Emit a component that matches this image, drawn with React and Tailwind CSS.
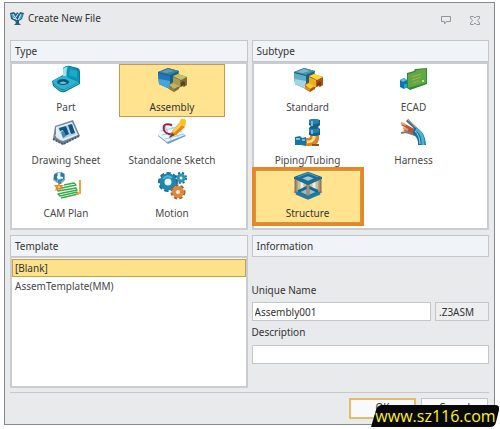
import React, { useState } from "react";

function AppIcon() {
  return (
    <svg width="14" height="14" viewBox="0 0 14 14" aria-hidden="true">
      <path d="M0 2 L4 1 L6 3 L7 1 L9 3 L10 1 L14 2 L12 8 L9 10 L9 12 L11 14 H4 L6 12 L5 10 L1 8Z" fill="#27607f" />
      <path d="M1 3 L4 3 L5 7 L3 8Z M9 5 L13 3 L11 8 L9 9Z" fill="#3fa5d0" />
      <path d="M3 3 L7 9 M8 3 L6 6 M11 3 L8 9 M3 7 L6 8" stroke="#d6eef7" strokeWidth="1" />
    </svg>
  );
}

function PartIcon() {
  return (
    <svg width="30" height="28" viewBox="0 0 30 28" aria-hidden="true">
      <path d="M12 3 Q15 0 19 1 L27 3 Q29 4 29 7 L29 19 L14 27 Q11 28 8 26 L2 21 L1 16 L12 10Z" fill="#087996" />
      <path d="M12 4 Q15 0 18 2 L16 12 L28 17 L14 24 Q11 25 8 23 L2 18 Q1 16 3 15 L12 11Z" fill="#2eb4d0" />
      <path d="M16 5 Q17 1 21 2 L26 4 Q28 5 28 8 V17 L16 12Z" fill="#0b93b7" />
      <path d="M19 4 L26 6 V13 L18 10Z" fill="#1fa9c9" />
      <path d="M12 4 Q14 2 16 2 L15 11 L12 11Z" fill="#9ce2ee" />
      <ellipse cx="12" cy="17" rx="6" ry="3" fill="#075877" />
      <path d="M8 18 Q12 15 16 18 Q12 20 8 18Z" fill="#8bb8bd" />
      <path d="M3 20 L9 25 Q11 26 14 25 L28 18" fill="none" stroke="#4dbcd3" />
    </svg>
  );
}

function BlockIcon({ muted = false }) {
  return (
    <svg width="30" height="25" viewBox="0 0 30 25" aria-hidden="true">
      <path d="M1 5 L11 1 L22 4 L21 10 L13 22 L2 17Z" fill="#175f84" />
      <path d="M1 5 L11 1 L22 4 L13 8Z" fill={muted ? "#3c7f9e" : "#4a93ad"} />
      <path d="M4 5 L11 2 L17 4 L10 6Z" fill={muted ? "#5b9cb4" : "#7db9ca"} />
      <path d="M1 6 L13 9 V22 L2 17Z" fill={muted ? "#1d78c0" : "#5faccb"} />
      <path d="M2 12 L13 14 V22 L2 17Z" fill={muted ? "#45a5dc" : "#a3d6e3"} />
      <path d="M12 17 L16 15 V9 L21 7 L30 10 V18 L27 20 L25 19 L22 21 V22 L17 25 L12 22Z" fill={muted ? "#7d6c34" : "#a85618"} />
      <path d="M16 9 L21 7 L30 10 L24 13Z" fill={muted ? "#c9bd6d" : "#ffd83a"} />
      <path d="M16 10 L23 13 V20 L20 20 L16 18Z" fill={muted ? "#a99c50" : "#f0ad18"} />
      <path d="M12 18 L16 16 L22 19 L17 22Z" fill={muted ? "#c0b266" : "#ffc92b"} />
      <path d="M12 19 L17 22 V24 L12 22Z" fill={muted ? "#8f8142" : "#de9117"} />
      <path d="M24 20 V16 L26 14 L28 15 V19 L26 18Z" fill={muted ? "#54461f" : "#7b3c12"} />
    </svg>
  );
}

function SheetIcon() {
  return (
    <svg width="28" height="27" viewBox="0 0 28 27" aria-hidden="true">
      <path d="M3 7 L21 1 L28 17 L11 26 L1 20Z" fill="#76879a" />
      <path d="M4 8 L20 3 L26 16 L11 22 L4 18Z" fill="#e4eff5" />
      <path d="M6 9 L19 5 L24 15 L11 20Z" fill="#a9d3e8" />
      <path d="M7 9 L14 7 L17 15 L13 17 L11 11 L8 12Z M16 6 L20 5 L23 14 L19 15Z" fill="#14527f" />
      <path d="M9 13 L12 12 L14 17 L11 19Z" fill="#3f86b5" />
      <path d="M1 20 L11 25 L27 17" fill="none" stroke="#4a5c70" strokeWidth="2" strokeDasharray="2 1" />
      <path d="M3 16 L5 19 L10 22 L6 15Z" fill="#dceaf3" />
    </svg>
  );
}

function SketchIcon() {
  return (
    <svg width="30" height="28" viewBox="0 0 30 28" aria-hidden="true">
      <path d="M5 8 L18 6 L29 18 L11 26 L1 18Z" fill="#6f9fc8" />
      <path d="M5 7 L18 5 L28 17 L10 24 L1 17Z" fill="#eef7fd" />
      <path d="M4 13 L20 9 M5 17 L25 13 M8 21 L27 16 M8 8 L14 22 M14 7 L21 19" stroke="#9cccec" />
      <path d="M15 7 Q5 4 7 12 Q9 17 16 16" fill="none" stroke="#a31f3e" strokeWidth="2" />
      <path d="M14 15 L22 5 L28 9 L19 17 L13 19Z" fill="#e98a10" />
      <path d="M16 14 L24 6" stroke="#ffcf4c" strokeWidth="3" />
      <path d="M22 5 L24 1 Q29 0 29 4 L28 9Z" fill="#ffc21f" />
      <path d="M12 20 L15 15 L18 17Z" fill="#5e4736" />
    </svg>
  );
}

function CamIcon() {
  return (
    <svg width="29" height="29" viewBox="0 0 29 29" aria-hidden="true">
      <path d="M12 14 L22 12 L24 14 L5 18 L6 20 L24 17 L25 19 L6 23 L8 25 L25 21 L26 23 L9 27" fill="none" stroke="#36ac48" strokeWidth="1.4" strokeLinejoin="round" />
      <path d="M28 9 V22 L24 23" fill="none" stroke="#f0a03c" strokeWidth="2" />
      <path d="M2 3 Q7 -1 13 3 L13 9 L9 13 L5 12 L1 9Z" fill="#79aec4" />
      <path d="M2 4 L5 2 V10 L2 8Z M9 1 L12 3 V8 L9 10Z" fill="#2f7799" />
      <path d="M5 6 L11 7 M7 2 V8" stroke="#e5f4f8" strokeWidth="2" />
      <path d="M6 9 H9 V13 H6Z" fill="#4c8199" />
      <path d="M7 11 L8 14 L12 14 L9 17 L10 20 L7 18 L3 20 L4 17 L2 14 L6 14Z" fill="#ee8a2a" />
      <circle cx="7" cy="16" r="1" fill="#ffe08a" />
    </svg>
  );
}

function MotionIcon() {
  return (
    <svg width="29" height="29" viewBox="0 0 29 29" aria-hidden="true">
      <circle cx="10" cy="11" r="8" fill="none" stroke="#1c6f95" strokeWidth="4" strokeDasharray="4 2" />
      <circle cx="10" cy="11" r="6" fill="#e5f4f5" stroke="#1f86af" strokeWidth="5" />
      <path d="M5 8 Q9 3 14 7" fill="none" stroke="#54b3cf" strokeWidth="2" />
      <circle cx="23" cy="7" r="5" fill="none" stroke="#176886" strokeWidth="2" strokeDasharray="2 2" />
      <circle cx="23" cy="7" r="3" fill="#e6f6fa" stroke="#2a97ba" strokeWidth="3" />
      <circle cx="20" cy="21" r="6" fill="none" stroke="#b75c20" strokeWidth="3" strokeDasharray="3 2" />
      <circle cx="20" cy="21" r="4" fill="#fff2d6" stroke="#dc8a40" strokeWidth="4" />
    </svg>
  );
}

function EcadIcon() {
  return (
    <svg width="29" height="25" viewBox="0 0 29 25" aria-hidden="true">
      <path d="M8 6 L15 4 L16 2 L28 1 V17 L11 23 L8 21Z" fill="#2f8a3a" />
      <path d="M9 7 L16 5 L17 3 L27 2 V16 L9 21Z" fill="#5fa944" />
      <path d="M13 10 L22 7 M13 13 L22 10 M14 16 L20 14" stroke="#b3a94a" strokeWidth="1" />
      <path d="M23 14 H25 M24 13 V15" stroke="#e5f29a" />
      <path d="M1 13 L5 11 L8 13 V20 L5 22 L1 20Z" fill="#1272ac" />
      <path d="M1 13 L5 11 L8 13 L4 15Z" fill="#61b9e2" />
      <path d="M5 17 H8 V21 H5Z" fill="#1ba6d5" />
    </svg>
  );
}

function PipingIcon() {
  return (
    <svg width="28" height="29" viewBox="0 0 28 29" aria-hidden="true">
      <path d="M16 16 H25 V21 Q24 28 16 28 H12 V20 H14 Q17 20 16 16Z" fill="#d9822a" />
      <path d="M20 17 V20 Q19 24 13 24" fill="none" stroke="#ffdf7e" strokeWidth="3" />
      <path d="M15 2 Q20 0 26 2 V7 L24 9 L26 11 V17 Q20 19 15 17 V10 L17 8 L15 7Z" fill="#155f88" />
      <path d="M15 2 Q20 0 25 2 V5 Q20 7 15 5Z M15 10 Q20 12 25 10 V14 Q20 16 15 14Z" fill="#2383ad" />
      <path d="M18 3 V8 M18 12 V16" stroke="#6cbdd6" strokeWidth="2" />
      <path d="M1 19 L6 18 L8 20 L12 19 V28 L7 27 L1 27Z" fill="#1a74a0" />
      <path d="M2 21 H6 M8 22 H11" stroke="#70c1dc" strokeWidth="2" />
      <path d="M18 26 H25 V28 H18Z" fill="#8f542a" />
    </svg>
  );
}

function HarnessIcon() {
  return (
    <svg width="27" height="28" viewBox="0 0 27 28" aria-hidden="true">
      <path d="M7 2 Q14 8 18 13" fill="none" stroke="#4f6f78" strokeWidth="3" />
      <path d="M7 1 Q14 6 17 11" fill="none" stroke="#d8c8b0" />
      <path d="M2 6 L15 13 M4 11 L16 15" stroke="#b9523a" strokeWidth="3" />
      <path d="M1 5 L6 7 M3 10 L8 12" stroke="#e2a36a" strokeWidth="2" />
      <path d="M1 15 L6 14 L15 17" fill="none" stroke="#7d7b75" strokeWidth="2" />
      <path d="M14 9 Q25 12 26 27 H18 Q19 21 13 16Z" fill="#166f9b" />
      <path d="M16 11 Q24 16 23 27" fill="none" stroke="#4bb2d1" strokeWidth="3" />
      <path d="M15 13 Q20 18 20 26" fill="none" stroke="#a5dbe5" strokeWidth="1" />
    </svg>
  );
}

function StructureIcon() {
  return (
    <svg width="28" height="29" viewBox="0 0 28 29" aria-hidden="true">
      <path d="M1 7 L14 12 L27 7 V22 L14 27 L1 22Z" fill="#c6bf98" />
      <path d="M8 11 V20 M20 11 V20" stroke="#e9efe2" strokeWidth="3" />
      <path d="M3 21 L14 16 L25 21 L14 26Z" fill="#8fc0cd" stroke="#1a668e" strokeWidth="3" />
      <path d="M2 7 V22 M26 7 V22 M14 12 V25" stroke="#8c775f" strokeWidth="3" />
      <path d="M3 8 V21 M25 8 V21 M14 13 V24" stroke="#c3a884" strokeWidth="1" />
      <path d="M3 7 L14 3 L25 7 L14 12Z" fill="#9cc8d3" stroke="#1c6c96" strokeWidth="4" />
      <path d="M4 6 L14 2 L24 6" fill="none" stroke="#4a9fc0" strokeWidth="1" />
      <path d="M2 22 L14 27 L26 22" fill="none" stroke="#237ba5" strokeWidth="3" />
    </svg>
  );
}

const fileTypes = [
  { label: "Part", icon: <PartIcon /> },
  { label: "Assembly", icon: <BlockIcon muted /> },
  { label: "Drawing Sheet", icon: <SheetIcon /> },
  { label: "Standalone Sketch", icon: <SketchIcon /> },
  { label: "CAM Plan", icon: <CamIcon /> },
  { label: "Motion", icon: <MotionIcon /> },
];

const subtypes = [
  { label: "Standard", icon: <BlockIcon /> },
  { label: "ECAD", icon: <EcadIcon /> },
  { label: "Piping/Tubing", icon: <PipingIcon /> },
  { label: "Harness", icon: <HarnessIcon /> },
  { label: "Structure", icon: <StructureIcon /> },
];

const templates = ["[Blank]", "AssemTemplate(MM)"];

function PanelHeader({ title }) {
  return <h2 className="h-[22px] border border-[#c3c7cc] bg-[#f0f4f8] px-1 leading-5">{title}</h2>;
}

function IconGrid({ items, selected, onSelect, highlighted = false }) {
  return (
    <div className="grid h-[168px] grid-cols-[106px_106px] content-start border-2 border-[#c9cdd1] bg-white pl-px">
      {items.map((item) => {
        const active = item.label === selected;
        return (
          <button
            key={item.label}
            type="button"
            aria-pressed={active}
            onClick={() => onSelect(item.label)}
            className={`relative flex h-[53px] flex-col items-center justify-between whitespace-nowrap border pb-px leading-4 ${
              active ? "border-[#c79b4b] bg-[#ffe38f] text-[#333333]" : "border-transparent text-[#484848]"
            }`}
          >
            <span className="flex h-7 items-center">{item.icon}</span>
            <span>{item.label}</span>
            {active && highlighted ? <span className="pointer-events-none absolute -inset-1 border-3 border-[#ed8424]" /> : null}
          </button>
        );
      })}
    </div>
  );
}

function Watermark() {
  return (
    <div className="absolute right-0 bottom-[2px] h-[22px] w-[129px]">
      <svg className="absolute inset-0 h-full w-full" viewBox="0 0 129 22" preserveAspectRatio="none" aria-hidden="true">
        <path d="M10 0 H124 Q129 0 128 5 L125 17 Q124 22 119 22 H0 L5 5 Q6 1 10 0Z" fill="#080808" />
      </svg>
      <span className="relative block whitespace-nowrap text-center font-['Open_Sans',sans-serif] text-[16px] font-medium leading-[22px] text-[#fff21c]">
        www.sz116.com
      </span>
    </div>
  );
}

export default function App() {
  const [type, setType] = useState("Assembly");
  const [subtype, setSubtype] = useState("Structure");
  const [template, setTemplate] = useState("[Blank]");
  const [name, setName] = useState("Assembly001");
  const [description, setDescription] = useState("");

  return (
    <div className="relative bg-white px-1 pt-[2px] pb-1 font-['Noto_Sans','Open_Sans',sans-serif] text-[10px] text-[#333333]">
      <main className="mr-px border border-[#85898e] bg-[#e8eaec] px-[5px] pb-[5px]">
        <header className="flex h-[37px] items-start justify-between pt-[7px] pr-[9px]">
          <h1 className="flex items-center gap-1 leading-4">
            <AppIcon />
            Create New File
          </h1>
          <div className="flex h-5 items-center gap-[19px] text-[#92959a]">
            <button type="button" aria-label="Feedback">
              <svg width="10" height="9" viewBox="0 0 10 9" fill="none" stroke="currentColor" aria-hidden="true">
                <path d="M0.5 0.5 H9.5 V5.5 H5.5 L3.5 8 V5.5 H0.5Z" />
              </svg>
            </button>
            <button type="button" aria-label="Close">
              <svg width="10" height="9" viewBox="0 0 10 9" fill="none" stroke="currentColor" aria-hidden="true">
                <path d="M0.5 0.5 H3.5 L5 2 L6.5 0.5 H9.5 V2 L7.5 4.5 L9.5 7 V8.5 H6.5 L5 7 L3.5 8.5 H0.5 V7 L2.5 4.5 L0.5 2Z" />
              </svg>
            </button>
          </div>
        </header>

        <div className="grid grid-cols-2 gap-x-1 gap-y-[5px]">
          <section>
            <PanelHeader title="Type" />
            <IconGrid items={fileTypes} selected={type} onSelect={setType} />
          </section>
          <section>
            <PanelHeader title="Subtype" />
            <IconGrid items={subtypes} selected={subtype} onSelect={setSubtype} highlighted />
          </section>
          <section className="flex flex-col">
            <PanelHeader title="Template" />
            <ul className="flex-1 border-2 border-t border-[#c9cdd1] bg-white pt-px">
              {templates.map((item) => (
                <li key={item}>
                  <button
                    type="button"
                    onClick={() => setTemplate(item)}
                    className={`block h-[18px] w-full border px-[2px] text-left leading-4 ${
                      item === template ? "border-[#c8a04d] bg-[#fde28c] text-[#333333]" : "border-transparent text-[#484848]"
                    }`}
                  >
                    {item}
                  </button>
                </li>
              ))}
            </ul>
          </section>
          <section>
            <PanelHeader title="Information" />
            <div className="pt-[25px] pb-6">
              <label htmlFor="unique-name" className="block h-5 leading-4">Unique Name</label>
              <div className="flex gap-1">
                <input
                  id="unique-name"
                  value={name}
                  onChange={(e) => setName(e.target.value)}
                  className="h-[19px] min-w-0 flex-1 border border-[#c3c6ca] bg-white px-[2px]"
                />
                <input
                  aria-label="File extension"
                  value=".Z3ASM"
                  readOnly
                  className="h-[19px] w-[54px] border border-[#c3c6ca] bg-[#eceeef] px-[3px]"
                />
              </div>
              <label htmlFor="description" className="block h-6 pt-[3px] leading-4">Description</label>
              <input
                id="description"
                value={description}
                onChange={(e) => setDescription(e.target.value)}
                className="block h-[19px] w-full border border-[#c3c6ca] bg-white px-[2px]"
              />
            </div>
          </section>
        </div>

        <footer className="mt-1 flex justify-end gap-[5px] border-t border-[#c5c8cc] pt-[5px] pr-px">
          <button type="button" className="h-[21px] w-[67px] border-2 border-[#dfbd69] bg-[#f8f9fa] pb-1 leading-3">OK</button>
          <button type="button" className="h-[21px] w-[67px] border border-[#c3c6ca] bg-[#f8f9fa] pb-1 leading-3">Cancel</button>
        </footer>
      </main>
      <Watermark />
    </div>
  );
}
